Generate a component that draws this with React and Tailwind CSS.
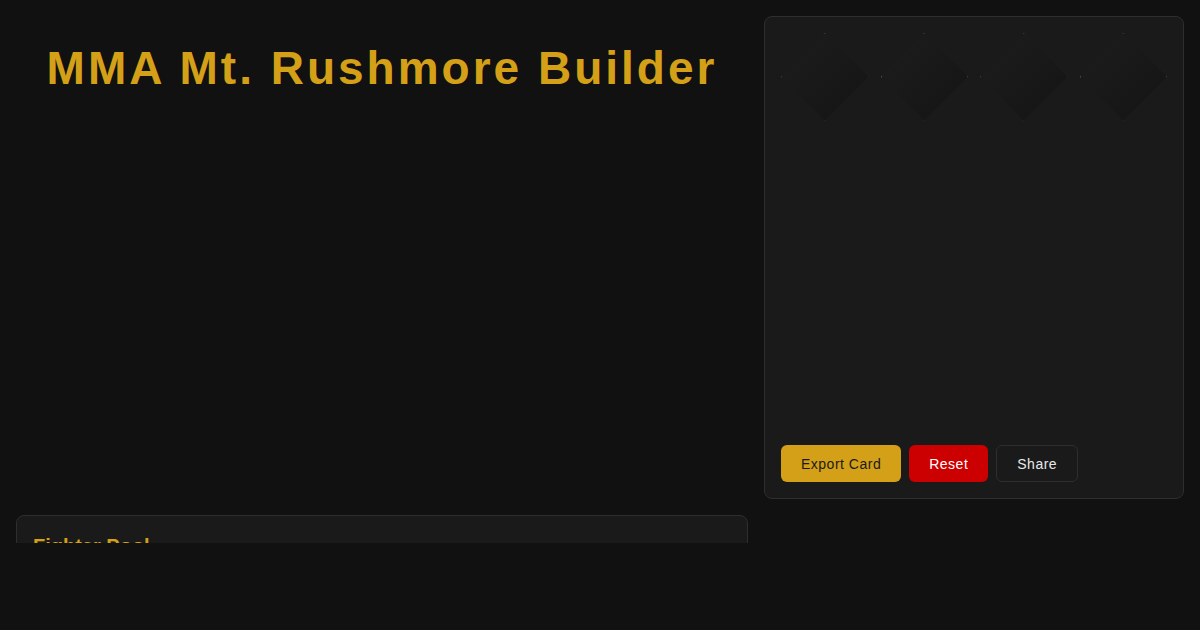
import React from 'react'

const slots = [1, 2, 3, 4]

// Diamond-shaped empty slot (square clipped to a rhombus)
const Slot = () => (
  <div
    className="aspect-square w-full border border-[#444] bg-gradient-to-br from-[#1d1d1d] to-[#141414]"
    style={{ clipPath: 'polygon(50% 0, 100% 50%, 50% 100%, 0 50%)' }}
  />
)

export default function App() {
  return (
    <div className="min-h-[630px] bg-[#111111] font-['Liberation_Sans',Arial,sans-serif]">
      <div className="h-[543px] overflow-hidden">
        <div className="grid grid-cols-[732px_420px] gap-4 p-4">
          {/* Title */}
          <div>
            <h1 className="pt-[29px] text-center text-[46px] font-bold leading-[46px] tracking-[3px] text-[#d4a017]">
              MMA Mt. Rushmore Builder
            </h1>
          </div>

          {/* Preview card */}
          <div className="flex h-[483px] flex-col rounded-lg border border-[#2e2e2e] bg-[#1a1a1a] p-4">
            <div className="grid grid-cols-4 gap-3">
              {slots.map((s) => (
                <Slot key={s} />
              ))}
            </div>
            <div className="mt-auto flex gap-2">
              <button className="h-[37px] rounded-md bg-[#d4a017] px-5 text-sm tracking-[0.5px] text-[#1a1a1a]">
                Export Card
              </button>
              <button className="h-[37px] rounded-md bg-[#cc0000] px-5 text-sm tracking-[0.5px] text-white">
                Reset
              </button>
              <button className="h-[37px] rounded-md border border-[#2e2e2e] bg-[#1a1a1a] px-5 text-sm tracking-[0.5px] text-[#e8e8e8]">
                Share
              </button>
            </div>
          </div>

          {/* Fighter pool */}
          <div className="h-[400px] rounded-lg border border-[#2e2e2e] bg-[#1a1a1a] p-4">
            <h2 className="text-xl font-bold text-[#d4a017]">Fighter Pool</h2>
          </div>
        </div>
      </div>
    </div>
  )
}
